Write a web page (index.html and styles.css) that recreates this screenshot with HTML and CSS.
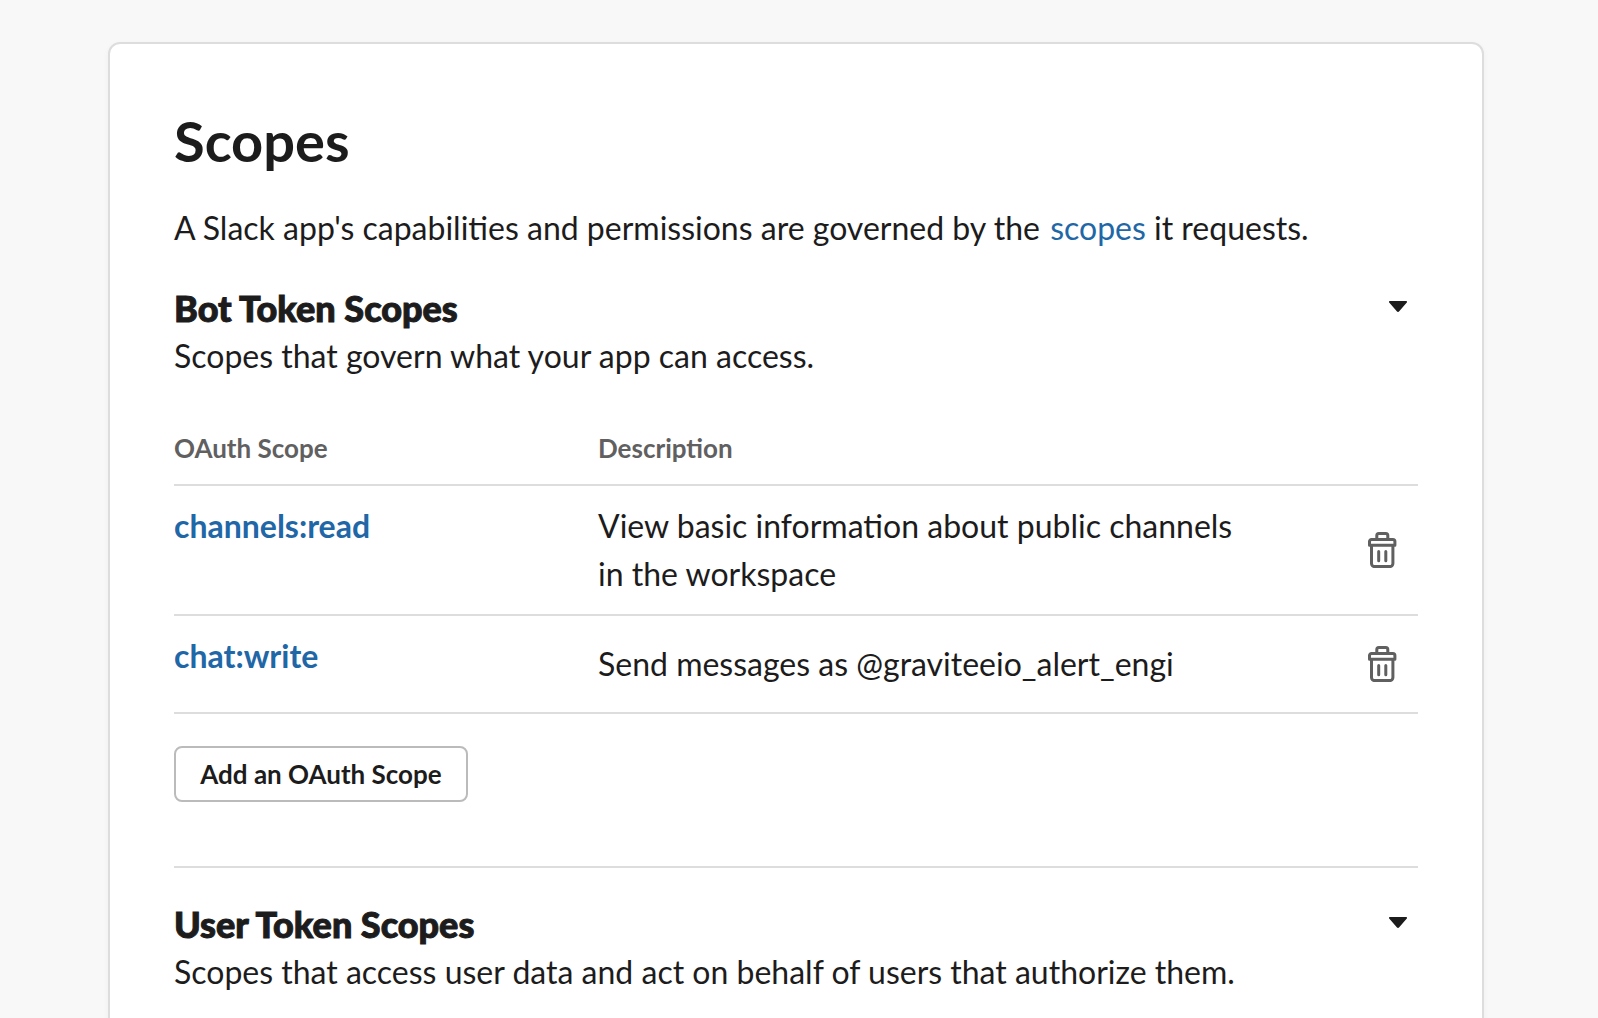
FILE: index.html
```html
<!DOCTYPE html>
<html lang="en">
<head>
<meta charset="utf-8">
<title>Scopes</title>
<link rel="stylesheet" href="styles.css">
</head>
<body>
<main class="card">
  <h1 class="title">Scopes</h1>
  <p class="intro">A Slack app's capabilities and permissions are governed by the <a class="link" href="#scopes">scopes</a> it requests.</p>

  <section class="section">
    <div class="section-head">
      <h2 class="subtitle">Bot Token Scopes</h2>
      <button class="toggle" type="button" aria-label="Toggle Bot Token Scopes"><svg class="caret" viewBox="0 0 18 11" aria-hidden="true"><path d="M1.200 0h15.600a1 1 0 0 1 .8 1.800L10 10.500a1.400 1.400 0 0 1-2 0L.4 1.800A1 1 0 0 1 1.200 0z"/></svg></button>
    </div>
    <p class="text">Scopes that govern what your app can access.</p>
    <table class="scopes">
      <thead>
        <tr><th class="col-scope" scope="col">OAuth Scope</th><th scope="col">Description</th><td class="col-action"></td></tr>
      </thead>
      <tbody>
        <tr>
          <td class="name"><a class="link" href="#channels-read">channels:read</a></td>
          <td class="description">View basic information about public channels in the workspace</td>
          <td class="action"><button class="delete" type="button" aria-label="Delete channels:read"><svg class="trash" viewBox="0 0 29 36" aria-hidden="true"><path d="M8.800 7V3.500a2 2 0 0 1 2-2h7a2 2 0 0 1 2 2V7M1.500 13.200V9.500a2 2 0 0 1 2-2h21.400a2 2 0 0 1 2 2v3.700zM3.500 13.200v18.400a3 3 0 0 0 3 3h15.400a3 3 0 0 0 3-3V13.200M10.700 19.500v9.200M17.800 19.500v9.200"/></svg></button></td>
        </tr>
        <tr>
          <td class="name"><a class="link" href="#chat-write">chat:write</a></td>
          <td class="description single">Send messages as @graviteeio_alert_engi</td>
          <td class="action"><button class="delete" type="button" aria-label="Delete chat:write"><svg class="trash" viewBox="0 0 29 36" aria-hidden="true"><path d="M8.800 7V3.500a2 2 0 0 1 2-2h7a2 2 0 0 1 2 2V7M1.500 13.200V9.500a2 2 0 0 1 2-2h21.400a2 2 0 0 1 2 2v3.700zM3.500 13.200v18.400a3 3 0 0 0 3 3h15.400a3 3 0 0 0 3-3V13.200M10.700 19.500v9.200M17.800 19.500v9.200"/></svg></button></td>
        </tr>
      </tbody>
    </table>
    <button class="add" type="button">Add an OAuth Scope</button>
  </section>

  <section class="section divided">
    <div class="section-head">
      <h2 class="subtitle">User Token Scopes</h2>
      <button class="toggle" type="button" aria-label="Toggle User Token Scopes"><svg class="caret" viewBox="0 0 18 11" aria-hidden="true"><path d="M1.200 0h15.600a1 1 0 0 1 .8 1.800L10 10.500a1.400 1.400 0 0 1-2 0L.4 1.800A1 1 0 0 1 1.200 0z"/></svg></button>
    </div>
    <p class="text">Scopes that access user data and act on behalf of users that authorize them.</p>
  </section>
</main>
</body>
</html>
```

FILE: styles.css
```css
* { box-sizing: border-box; }
body {
  margin: 0;
  padding: 42px 114px 0 108px;
  background: #f8f8f8;
  color: #1d1c1d;
  font: 32px/48px Lato, sans-serif;
}
h1, h2, p { margin: 0; }
button { font: inherit; color: inherit; background: none; border: 0; padding: 0; cursor: pointer; }
.card {
  padding: 64px;
  background: #fff;
  border: 2px solid #ddd;
  border-radius: 12px;
  box-shadow: 0 2px 6px rgba(0, 0, 0, 0.04);
}
.title { font-size: 56px; line-height: 66px; font-weight: 700; }
.intro { padding-top: 30px; }
.link { color: #1f67a6; text-decoration: none; }
.intro .link { margin-left: 2px; }
.section { padding-top: 32px; }
.divided { margin-top: 64px; border-top: 2px solid #ddd; }
.section-head { display: flex; justify-content: space-between; align-items: center; padding-right: 11px; }
.subtitle { font-size: 36px; line-height: 48px; font-weight: 900; -webkit-text-stroke: 1px currentColor; }
.toggle { display: flex; padding-bottom: 4px; }
.caret { width: 18px; height: 11px; fill: #1d1c1d; }
.scopes { width: 100%; margin-top: 32px; border-collapse: collapse; table-layout: fixed; }
.scopes th, .scopes td { padding: 0; text-align: left; vertical-align: top; }
.scopes tr { border-bottom: 2px solid #ddd; }
.scopes th { padding: 16px 0; font-size: 26px; line-height: 40px; color: #616061; }
.col-scope { width: 424px; }
.col-action { width: 140px; }
.scopes .name { padding: 16px 0; font-weight: 700; }
.scopes .description { padding: 16px 32px 16px 0; }
.scopes .single { padding: 24px 0; }
.scopes .action { padding-right: 21px; vertical-align: middle; }
.delete { display: block; margin-left: auto; }
.trash {
  display: block;
  width: 29px;
  height: 36px;
  fill: none;
  stroke: #616061;
  stroke-width: 3;
  stroke-linecap: round;
  stroke-linejoin: round;
}
.add {
  margin-top: 32px;
  width: 294px;
  height: 56px;
  border: 2px solid #bbb;
  border-radius: 8px;
  font-size: 26px;
  font-weight: 700;
  display: block;
}
```
